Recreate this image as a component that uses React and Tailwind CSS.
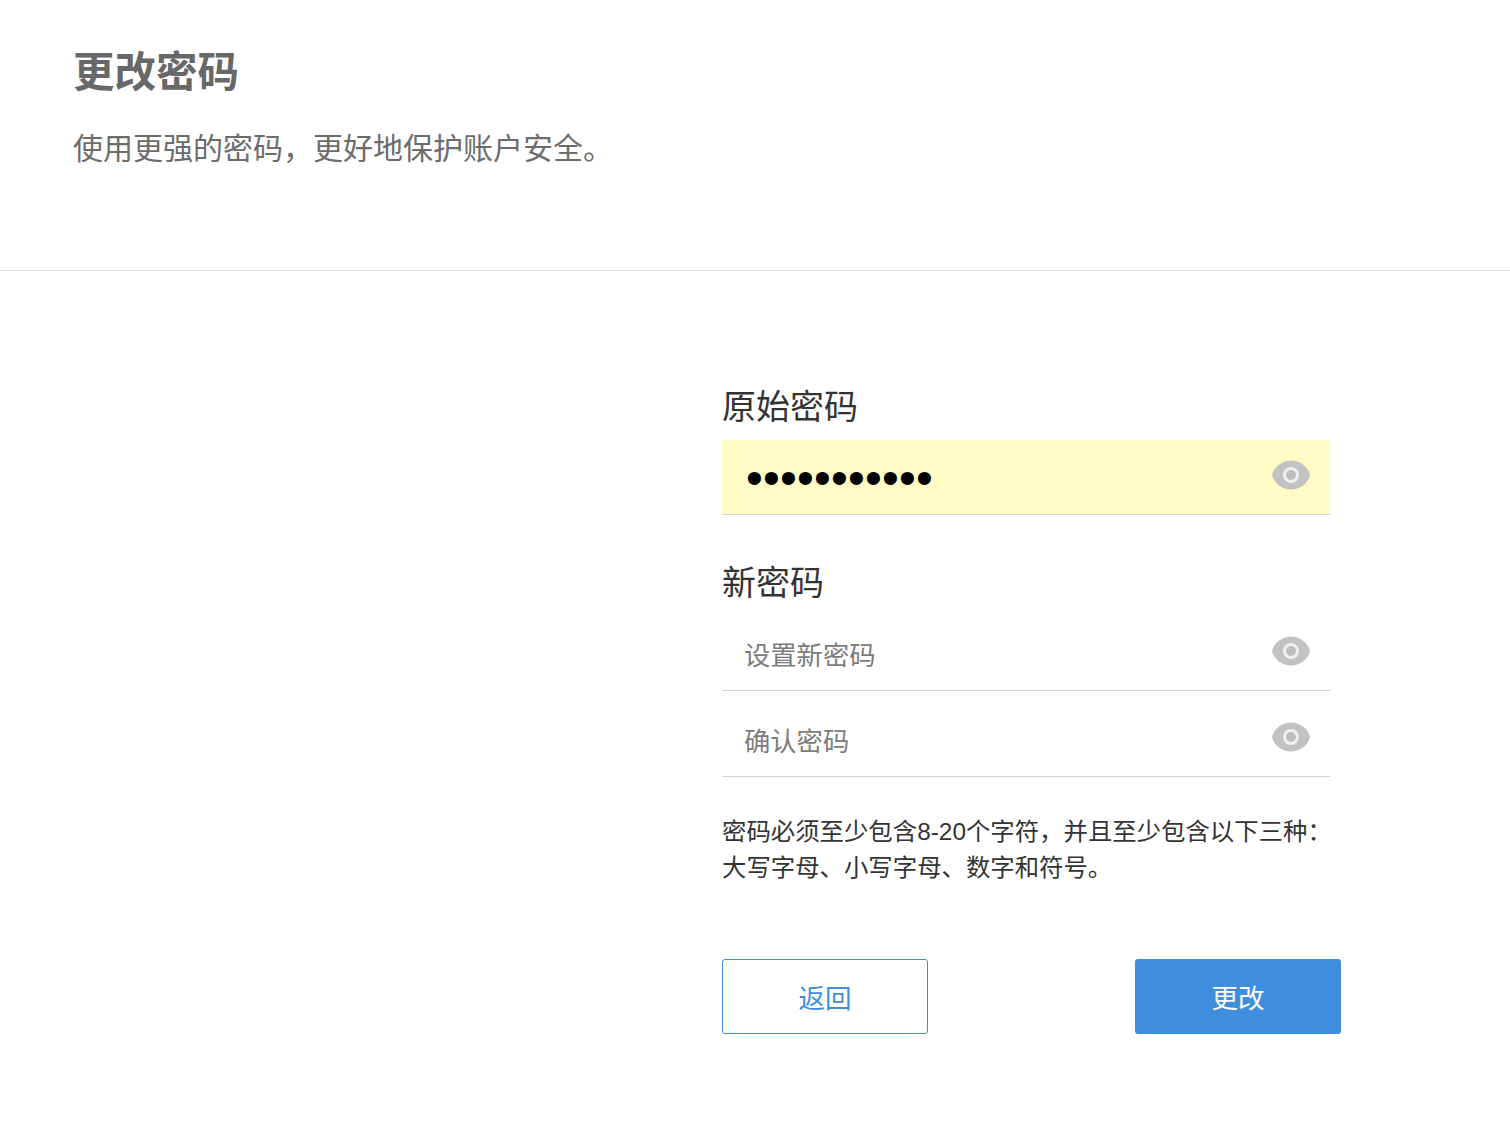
import React from "react";

const EyeIcon = () => (
  <svg width="40" height="32" viewBox="0 0 40 32" className="block blur-[0.6px]">
    <path d="M1 16C3 7 12 1.500 20 1.500S37 7 39 16C37 25 28 30.500 20 30.500S3 25 1 16Z" fill="#c2c2c2" />
    <circle cx="20" cy="16" r="6.500" fill="#bdbdbd" stroke="#f0f0f0" strokeWidth="3" />
  </svg>
);

const PasswordField = ({ placeholder, value, filled }) => (
  <div className={`flex h-[75px] items-center border-b border-[#d4d4d4] pl-[22px] pr-[19px] ${filled ? "bg-[#fefbc4]" : ""}`}>
    <input
      type="password"
      placeholder={placeholder}
      defaultValue={value}
      className={`min-w-0 flex-1 bg-transparent text-black outline-none placeholder:text-[#7c7c7c] ${filled ? "h-[40px] pl-[2px] pt-[1px] text-[48px] leading-[40px] tracking-[0.2px]" : "pt-[7px] text-[26.300px]"}`}
    />
    <div className="mb-[5px]">
      <EyeIcon />
    </div>
  </div>
);

export default function App() {
  return (
    <div className="min-h-[1134px] bg-white font-['Liberation_Sans','Noto_Sans_CJK_SC',sans-serif]">
      {/* Header */}
      <div className="h-[271px] border-b border-[#e0e0e0] pl-[73px] pt-[46px]">
        <h1 className="text-[41.500px] font-bold leading-[54px] text-[#686868]">更改密码</h1>
        <p className="mt-[27px] text-[30px] leading-[44px] text-[#6c6c6c]">使用更强的密码，更好地保护账户安全。</p>
      </div>

      {/* Form */}
      <div className="ml-[722px] w-[619px] pt-[112px]">
        <label className="block text-[34px] leading-[48px] text-[#333333]">原始密码</label>
        <div className="mt-[9px] w-[608px]">
          <PasswordField value="abcdefghijk" filled />
        </div>
        <label className="mt-[44px] block text-[34px] leading-[48px] text-[#333333]">新密码</label>
        <div className="w-[608px]">
          <div className="mt-[9px]">
            <PasswordField placeholder="设置新密码" />
          </div>
          <div className="mt-[11px]">
            <PasswordField placeholder="确认密码" />
          </div>
        </div>
        <p className="mt-[37px] text-[24.400px] leading-[35.500px] text-[#333333]">
          密码必须至少包含8-20个字符，并且至少包含以下三种：
          <br />
          大写字母、小写字母、数字和符号。
        </p>
        <div className="mt-[74px] flex justify-between">
          <button className="h-[75px] w-[206px] rounded-[3px] border border-[#3f8ddb] bg-white pt-[7px] text-[26.500px] text-[#3f8ddb]">返回</button>
          <button className="h-[75px] w-[206px] rounded-[3px] bg-[#3f8ddd] pt-[7px] text-[26.500px] text-white">更改</button>
        </div>
      </div>
    </div>
  );
}
